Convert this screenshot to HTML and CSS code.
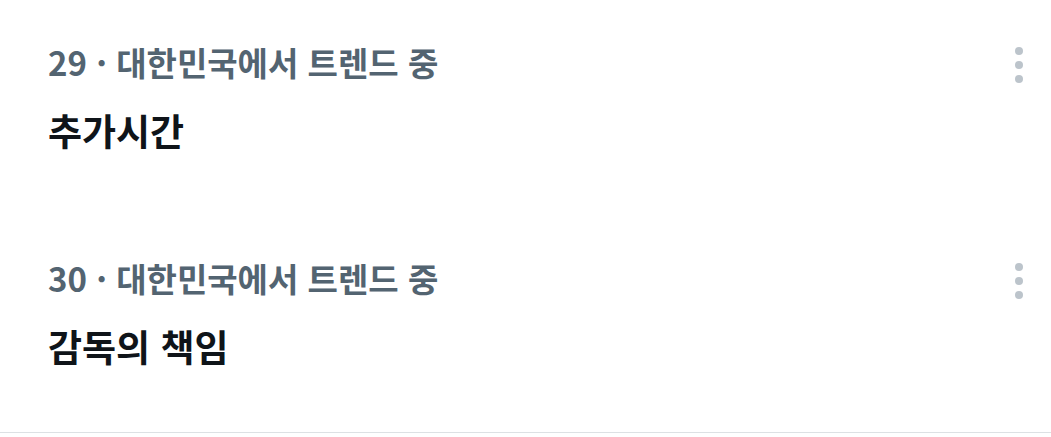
FILE: index.html
```html
<!DOCTYPE html>
<html lang="ko">
<head>
  <meta charset="UTF-8">
  <meta name="viewport" content="width=device-width, initial-scale=1.0">
  <title>트렌드</title>
  <link rel="stylesheet" href="styles.css">
</head>
<body>
  <!-- 트렌드 목록 -->
  <div class="trend-list">
    <div class="trend">
      <div class="trend-body">
        <div class="trend-meta">29 · 대한민국에서 트렌드 중</div>
        <div class="trend-title">추가시간</div>
      </div>
      <button class="trend-more" aria-label="더 보기">
        <svg viewBox="0 0 40 40" width="40" height="40">
          <circle cx="20" cy="6" r="4"/>
          <circle cx="20" cy="20" r="4"/>
          <circle cx="20" cy="34" r="4"/>
        </svg>
      </button>
    </div>
    <div class="trend">
      <div class="trend-body">
        <div class="trend-meta">30 · 대한민국에서 트렌드 중</div>
        <div class="trend-title">감독의 책임</div>
      </div>
      <button class="trend-more" aria-label="더 보기">
        <svg viewBox="0 0 40 40" width="40" height="40">
          <circle cx="20" cy="6" r="4"/>
          <circle cx="20" cy="20" r="4"/>
          <circle cx="20" cy="34" r="4"/>
        </svg>
      </button>
    </div>
  </div>
</body>
</html>
```

FILE: styles.css
```css
body {
  margin: 0;
  background: #fff;
  font-family: "Noto Sans CJK KR", "Noto Sans", sans-serif;
}
/* 목록 전체 */
.trend-list {
  border-bottom: 1px solid #dde1e4;
}
/* 트렌드 한 줄 */
.trend {
  display: flex;
  align-items: flex-start;
  padding: 42px 12px 62px 48px;
}
.trend-body {
  flex: 1;
  display: flex;
  flex-direction: column;
  gap: 24px;
}
.trend-meta {
  font-size: 33px;
  line-height: 40px;
  font-weight: 700;
  color: #536471;
}
.trend-title {
  font-size: 37px;
  line-height: 48px;
  font-weight: 700;
  color: #0f1419;
}
/* 더 보기 버튼 */
.trend-more {
  margin-top: 3px;
  padding: 0;
  border: 0;
  background: none;
  width: 40px;
  height: 40px;
}
.trend-more svg {
  display: block;
  fill: #bcc4cb;
}
```
